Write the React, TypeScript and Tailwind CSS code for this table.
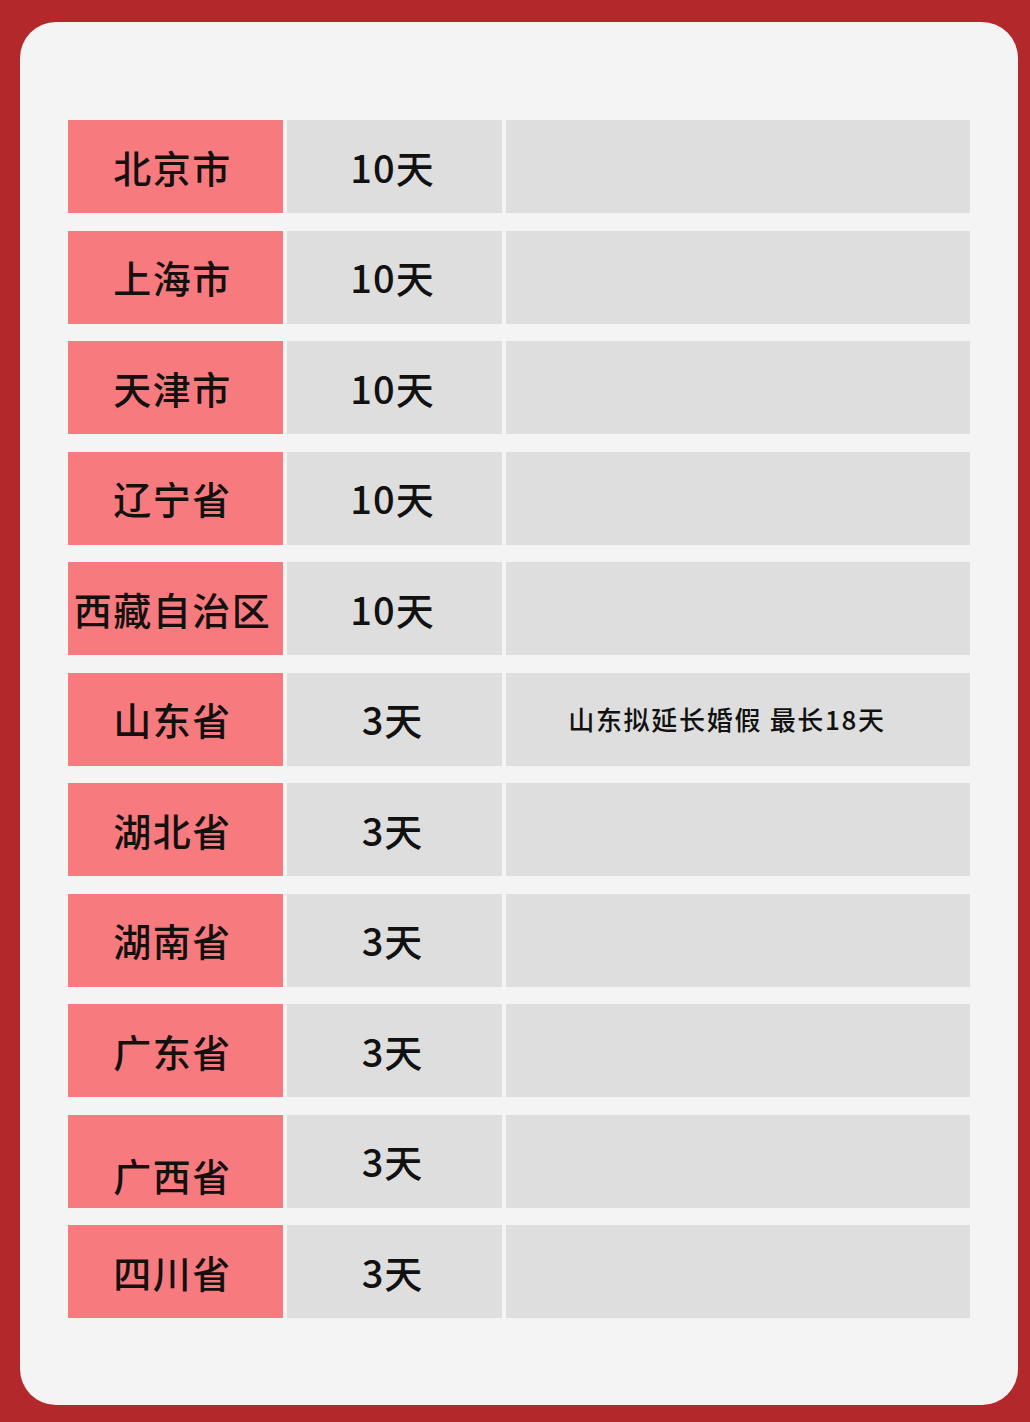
const ROWS: { region: string; days: string; note?: string; shift?: string }[] = [
  { region: "北京市", days: "10天" },
  { region: "上海市", days: "10天" },
  { region: "天津市", days: "10天" },
  { region: "辽宁省", days: "10天" },
  { region: "西藏自治区", days: "10天" },
  { region: "山东省", days: "3天", note: "山东拟延长婚假 最长18天" },
  { region: "湖北省", days: "3天" },
  { region: "湖南省", days: "3天" },
  { region: "广东省", days: "3天" },
  { region: "广西省", days: "3天", shift: "pt-7" },
  { region: "四川省", days: "3天" },
];

export default function App() {
  return (
    <div
      className="h-[1422px] w-full bg-[#b3282b] px-[20px] pt-[22px]"
      style={{ fontFamily: '"Noto Sans CJK SC", "Noto Sans", sans-serif' }}
    >
      <div className="h-[1383px] w-[998px] rounded-[36px] bg-[#f4f4f4] px-[48px] pt-[98px]">
        <div className="flex flex-col gap-[17.5px]">
          {ROWS.map((row) => (
            <Row key={row.region} {...row} />
          ))}
        </div>
      </div>
    </div>
  );
}

function Row({ region, days, note, shift }: { region: string; days: string; note?: string; shift?: string }) {
  return (
    <div className="flex h-[93px] gap-[4px]">
      <div
        className={`flex w-[215px] items-center justify-center bg-[#f77b7e] pr-[6px] text-[38px] font-medium leading-none tracking-[1.5px] text-[#141010] ${shift ?? ""}`}
      >
        {region}
      </div>
      <div className="flex w-[215px] items-center justify-center bg-[#dedede] pr-[4px] text-[38px] font-medium leading-none tracking-[1px] text-[#111]">
        {days}
      </div>
      <div className="flex flex-1 items-center justify-center bg-[#dedede] pr-[22px] text-[26px] font-medium leading-none tracking-[1.7px] text-[#111]">
        {note}
      </div>
    </div>
  );
}
